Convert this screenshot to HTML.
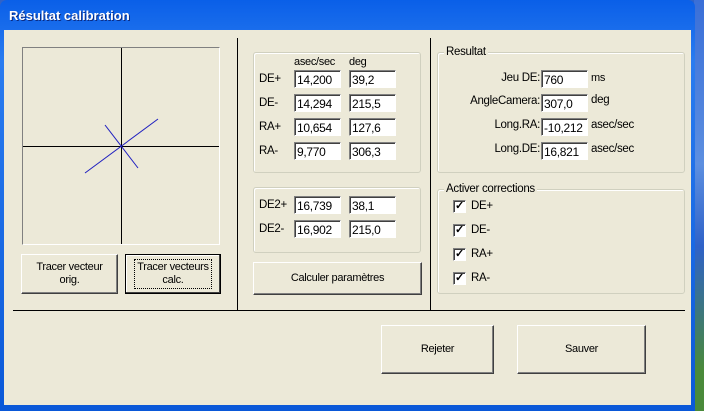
<!DOCTYPE html>
<html><head><meta charset="utf-8"><style>
*{margin:0;padding:0;box-sizing:border-box}
body{width:704px;height:411px;overflow:hidden;position:relative;background:#2f62c8;font-family:"Liberation Sans",sans-serif;font-size:11px;color:#000;letter-spacing:-0.3px}
.a{position:absolute}
.desk{left:694px;top:0;width:10px;height:411px;background:linear-gradient(#3a6fd8,#5d8fe0 40%,#2f62c8 60%,#4a8a3a 90%)}
.win{left:0;top:0;width:695px;height:411px;background:linear-gradient(#0a5fe8,#2a7cf0 15%,#0a58d8);border-radius:7px 7px 0 0}
.title{left:9px;top:8px;color:#fff;font-weight:bold;font-size:13px;text-shadow:1px 1px #0a2a80;letter-spacing:0}
.body{left:4px;top:30px;width:687px;height:375px;background:#ece9d8}
.grp{border:1px solid #d0d0bf;box-shadow:inset 1px 1px #fff;border-radius:3px}
.leg{background:#ece9d8;padding:0 2px;line-height:12px}
.in{background:#fff;border-top:1px solid #808080;border-left:1px solid #808080;border-right:1px solid #fff;border-bottom:1px solid #fff;box-shadow:inset 1px 1px #404040;height:18px;padding:3px 0 0 2px;line-height:12px;font-size:12px;width:47px}
.btn{background:#ece9d8;border:1px solid;border-color:#fff #404040 #404040 #fff;box-shadow:inset -1px -1px #808080;display:flex;align-items:center;justify-content:center;text-align:center;line-height:13px;font-size:11px}
.cb{width:13px;height:13px;background:#fff;border-top:1px solid #808080;border-left:1px solid #808080;border-right:1px solid #fff;border-bottom:1px solid #fff;box-shadow:inset 1px 1px #404040;font-size:11px;line-height:10px;text-align:center;font-weight:bold}
.lb{font-size:11.5px}
</style></head><body>
<div class="a desk"></div>
<div class="a win"></div>
<div class="a title">Résultat calibration</div>
<div class="a body"></div>
<div class="a" style="left:22px;top:47px;width:198px;height:198px;border:1px solid;border-color:#808080 #fff #fff #808080;background:#ece9d8"></div>
<svg class="a" style="left:0;top:0" width="704" height="411">
<line x1="121.5" y1="48" x2="121.5" y2="244" stroke="#000"/>
<line x1="23" y1="146.5" x2="219" y2="146.5" stroke="#000"/>
<line x1="85" y1="173" x2="158" y2="119" stroke="#2020c0"/>
<line x1="105" y1="125" x2="138" y2="168" stroke="#2020c0"/>
<line x1="237.5" y1="38" x2="237.5" y2="310" stroke="#000"/>
<line x1="430.5" y1="38" x2="430.5" y2="310" stroke="#000"/>
<line x1="13" y1="310.5" x2="685" y2="310.5" stroke="#000"/>
</svg>
<div class="a btn" style="left:21px;top:254px;width:97px;height:40px">Tracer vecteur<br>orig.</div>
<div class="a btn" style="left:125px;top:254px;width:96px;height:40px;border:1px solid #000;box-shadow:inset -1px -1px #404040,inset 1px 1px #fff"><span style="border:1px dotted #000;padding:1px 2px">Tracer vecteurs<br>calc.</span></div>
<div class="a grp" style="left:253px;top:52px;width:168px;height:121px"></div>
<div class="a" style="left:294px;top:56px">asec/sec</div>
<div class="a" style="left:349px;top:56px">deg</div>
<div class="a lb" style="left:259px;top:73px">DE+</div>
<div class="a lb" style="left:259px;top:97px">DE-</div>
<div class="a lb" style="left:259px;top:121px">RA+</div>
<div class="a lb" style="left:259px;top:145px">RA-</div>
<div class="a in" style="left:294px;top:70px">14,200</div><div class="a in" style="left:349px;top:70px">39,2</div>
<div class="a in" style="left:294px;top:94px">14,294</div><div class="a in" style="left:349px;top:94px">215,5</div>
<div class="a in" style="left:294px;top:118px">10,654</div><div class="a in" style="left:349px;top:118px">127,6</div>
<div class="a in" style="left:294px;top:142px">9,770</div><div class="a in" style="left:349px;top:142px">306,3</div>
<div class="a grp" style="left:253px;top:187px;width:168px;height:66px"></div>
<div class="a lb" style="left:259px;top:199px">DE2+</div>
<div class="a lb" style="left:259px;top:223px">DE2-</div>
<div class="a in" style="left:294px;top:196px">16,739</div><div class="a in" style="left:349px;top:196px">38,1</div>
<div class="a in" style="left:294px;top:220px">16,902</div><div class="a in" style="left:349px;top:220px">215,0</div>
<div class="a btn" style="left:253px;top:262px;width:169px;height:33px">Calculer paramètres</div>
<div class="a grp" style="left:437px;top:52px;width:248px;height:121px"></div>
<div class="a leg lb" style="left:444px;top:46px">Resultat</div>
<div class="a lb" style="left:440px;top:72px;width:100px;text-align:right">Jeu DE:</div>
<div class="a lb" style="left:440px;top:95px;width:100px;text-align:right">AngleCamera:</div>
<div class="a lb" style="left:440px;top:119px;width:100px;text-align:right">Long.RA:</div>
<div class="a lb" style="left:440px;top:143px;width:100px;text-align:right">Long.DE:</div>
<div class="a in" style="left:541px;top:70px">760</div>
<div class="a in" style="left:541px;top:94px">307,0</div>
<div class="a in" style="left:541px;top:118px">-10,212</div>
<div class="a in" style="left:541px;top:142px">16,821</div>
<div class="a" style="left:591px;top:72px">ms</div>
<div class="a lb" style="left:591px;top:94px">deg</div>
<div class="a lb" style="left:591px;top:119px">asec/sec</div>
<div class="a lb" style="left:591px;top:143px">asec/sec</div>
<div class="a grp" style="left:437px;top:189px;width:248px;height:105px"></div>
<div class="a leg lb" style="left:444px;top:183px">Activer corrections</div>
<div class="a cb" style="left:453px;top:200px">✓</div><div class="a lb" style="left:471px;top:200px">DE+</div>
<div class="a cb" style="left:453px;top:224px">✓</div><div class="a lb" style="left:471px;top:224px">DE-</div>
<div class="a cb" style="left:453px;top:248px">✓</div><div class="a lb" style="left:471px;top:248px">RA+</div>
<div class="a cb" style="left:453px;top:272px">✓</div><div class="a lb" style="left:471px;top:272px">RA-</div>
<div class="a btn" style="left:381px;top:325px;width:113px;height:49px">Rejeter</div>
<div class="a btn" style="left:517px;top:325px;width:129px;height:49px">Sauver</div>
</body></html>
